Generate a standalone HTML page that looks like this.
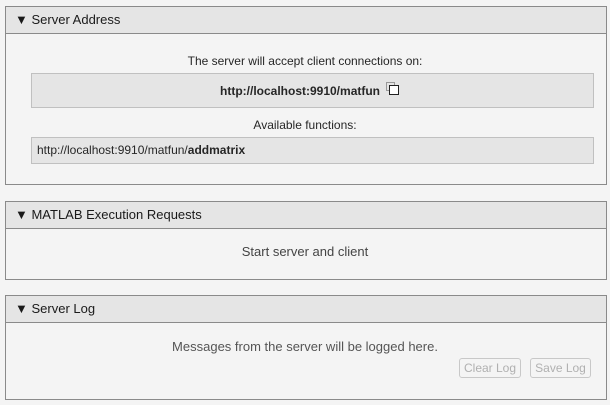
<!DOCTYPE html>
<html><head><style>
body{margin:0;width:610px;height:405px;background:#f4f4f4;font-family:"Liberation Sans",sans-serif;font-size:12px;color:#262626;position:relative;overflow:hidden}
.p{position:absolute;left:5px;width:602px;border:1px solid #8a8a8a;background:#f4f4f4;box-sizing:border-box}
.h{height:27px;background:#e5e5e5;border-bottom:1px solid #8a8a8a;box-sizing:border-box;font-size:13px;line-height:26px;padding-left:9px;color:#1a1a1a}
.a{position:absolute;white-space:nowrap}
.c{left:0;right:0;text-align:center}
.box{position:absolute;background:#e5e5e5;border:1px solid #c0c0c0;box-sizing:border-box}
.btn{position:absolute;top:358px;height:20px;border:1px solid #c8c8c8;border-radius:3px;color:#b0b0b0;box-sizing:border-box;line-height:18px;text-align:center}
</style></head><body>
<div class="p" style="top:6px;height:179px"><div class="h">▼ Server Address</div></div>
<div class="a c" style="top:54px">The server will accept client connections on:</div>
<div class="box" style="left:31px;top:73px;width:563px;height:35px"></div>
<div class="a" style="left:220px;top:84px;font-weight:bold">http://localhost:9910/matfun</div>
<svg class="a" style="left:385px;top:81px" width="16" height="16"><rect x="1.5" y="1.5" width="8" height="8" fill="none" stroke="#999"/><rect x="4.5" y="4.5" width="9" height="9" fill="#fff" stroke="#222"/></svg>
<div class="a c" style="top:118px">Available functions:</div>
<div class="box" style="left:31px;top:137px;width:563px;height:27px"></div>
<div class="a" style="left:37px;top:143px">http://localhost:9910/matfun/<b>addmatrix</b></div>
<div class="p" style="top:201px;height:79px"><div class="h">▼ MATLAB Execution Requests</div></div>
<div class="a c" style="top:244px;font-size:13px;color:#444">Start server and client</div>
<div class="p" style="top:295px;height:105px"><div class="h">▼ Server Log</div></div>
<div class="a c" style="top:339px;font-size:13px;color:#555">Messages from the server will be logged here.</div>
<div class="btn" style="left:459px;width:62px">Clear Log</div>
<div class="btn" style="left:530px;width:61px">Save Log</div>
</body></html>
